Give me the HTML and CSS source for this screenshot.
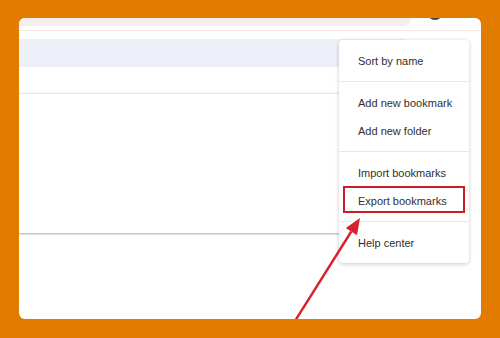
FILE: index.html
```html
<!DOCTYPE html>
<html lang="en">
<head>
    <meta charset="UTF-8">
    <meta name="viewport" content="width=device-width, initial-scale=1.0">
    <title>Bookmarks menu</title>
    <link rel="stylesheet" href="styles.css">
</head>
<body>
    <div class="window">
        <div class="avatar"></div>
        <div class="search-strip"></div>
        <div class="toolbar-line"></div>
        <div class="folder-bar"></div>
        <div class="list-card"></div>

        <div class="menu">
            <div class="menu-section">
                <div class="menu-item">Sort by name</div>
            </div>
            <div class="menu-section">
                <div class="menu-item">Add new bookmark</div>
                <div class="menu-item">Add new folder</div>
            </div>
            <div class="menu-section">
                <div class="menu-item">Import bookmarks</div>
                <div class="menu-item highlight">Export bookmarks</div>
            </div>
            <div class="menu-section">
                <div class="menu-item">Help center</div>
            </div>
        </div>

        <svg class="arrow" width="462" height="301" viewBox="0 0 462 301">
            <line x1="276" y1="303" x2="332.3" y2="213.5" stroke="#d7212b" stroke-width="2.4"/>
            <polygon points="341,200 338,217.2 326.8,210" fill="#d7212b"/>
        </svg>
    </div>
</body>
</html>
```

FILE: styles.css
```css
body {
    margin: 0;
    padding: 18px 19px 19px;
    background-color: #e27c00;
    font-family: "Liberation Sans", Arial, sans-serif;
}
.window {
    position: relative;
    height: 301px;
    background-color: #fff;
    border-radius: 6px;
    overflow: hidden;
}
.avatar {
    position: absolute;
    top: -14px;
    left: 408px;
    width: 16px;
    height: 16px;
    border-radius: 50%;
    background-color: #4a3d36;
}
.search-strip {
    width: 392px;
    height: 8px;
    background-color: #f6eeee;
    border-bottom-right-radius: 10px;
}
.toolbar-line {
    margin-top: 4px;
    height: 1px;
    background-color: #f4e6e3;
}
.folder-bar {
    margin-top: 8px;
    width: 386px;
    height: 28px;
    background-color: #edf0f8;
}
.list-card {
    margin-top: 26px;
    width: 386px;
    height: 139px;
    border-top: 1px solid #ececec;
    box-shadow: 0 1px 2px rgba(0, 0, 0, 0.32);
}
.menu {
    position: absolute;
    top: 22px;
    left: 320px;
    width: 130px;
    background-color: #fff;
    border-radius: 4px;
    box-shadow: 0 1px 4px rgba(0, 0, 0, 0.22);
}
.menu-section {
    padding: 7px 0 6px;
    border-top: 1px solid #e8e8ea;
}
.menu-section:first-child {
    border-top: none;
}
.menu-item {
    position: relative;
    height: 28px;
    line-height: 28px;
    padding-left: 19px;
    font-size: 11px;
    color: #2f2f31;
    white-space: nowrap;
}
.menu-item.highlight::after {
    content: "";
    position: absolute;
    top: -1px;
    left: 4px;
    right: 4px;
    bottom: 2px;
    border: 2px solid #c91e2a;
}
.arrow {
    position: absolute;
    top: 0;
    left: 0;
}
```
